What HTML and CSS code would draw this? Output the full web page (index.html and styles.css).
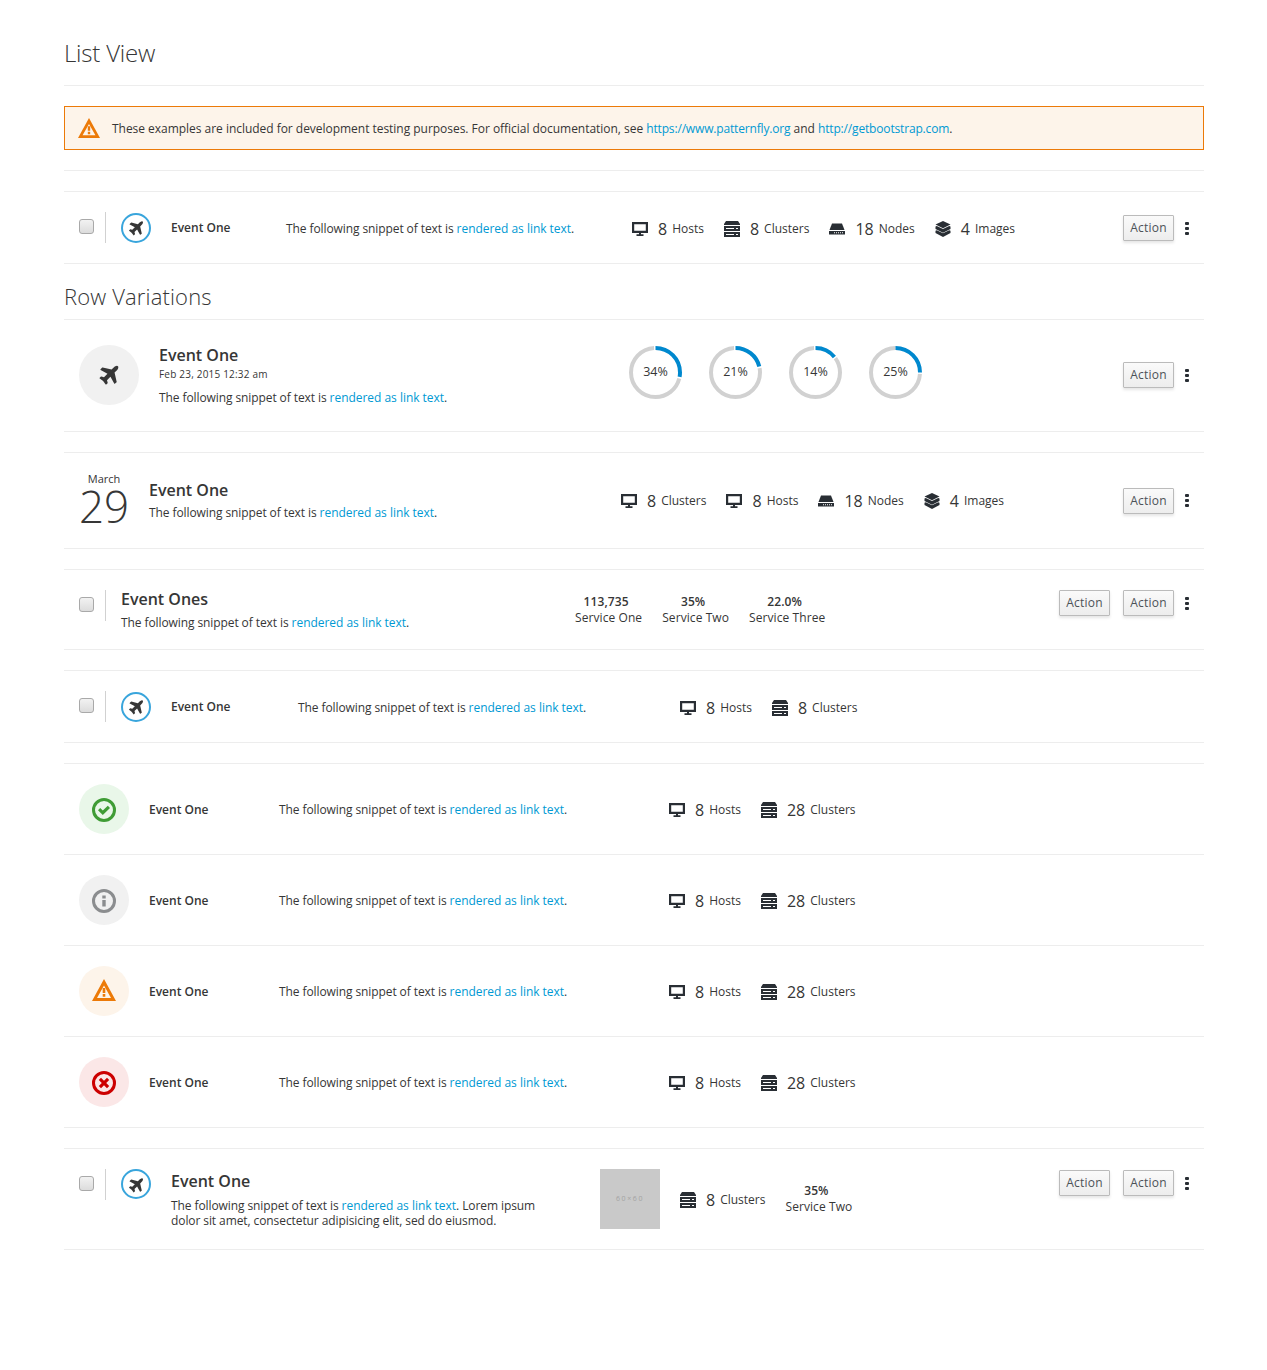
FILE: index.html
```html
<!DOCTYPE html>
<html lang="en">
<head>
  <meta charset="UTF-8">
  <title>List View</title>
  <link rel="stylesheet" href="styles.css">
</head>
<body>

<!-- Icon sprite -->
<svg class="sprite" xmlns="http://www.w3.org/2000/svg">
  <symbol id="i-plane" viewBox="0 0 1792 1792">
    <path d="M1568 160q44 52 12 148t-108 172l-161 161 160 696q5 19-12 33l-128 96q-7 6-19 6-4 0-7-1-15-3-21-16l-279-508-259 259 53 194q5 17-8 31l-96 96q-9 9-23 9h-2q-15-2-24-13l-189-252-252-189q-11-7-13-23-1-13 9-25l96-97q9-9 23-9 6 0 8 1l194 53 259-259-508-279q-14-8-17-24-2-16 9-27l128-128q14-13 30-8l665 159 160-160q76-76 172-108t148 12z"/>
  </symbol>
  <symbol id="i-desktop" viewBox="0 0 16 16">
    <path fill-rule="evenodd" d="M0 1h16v11H0zM2.200 3.200v6.600h11.600V3.200z"/>
    <path d="M7 12h2v1.200h2.500V15h-7v-1.800H7z"/>
  </symbol>
  <symbol id="i-cluster" viewBox="0 0 16 16">
    <path d="M2 0h12l2 3v1H0V3z"/>
    <path fill-rule="evenodd" d="M0 5h16v5H0zM2 7v1h8V7zM12 7v1h2V7zM0 11h16v5H0zM2 13v1h8v-1zM12 13v1h2v-1z"/>
  </symbol>
  <symbol id="i-node" viewBox="0 0 16 16">
    <path d="M3 2.500h10L15.500 9h-15z"/>
    <path fill-rule="evenodd" d="M0 10h16v3.500H0zM5 11.300v1h1v-1zM7 11.300v1h1v-1zM9 11.300v1h1v-1zM11 11.300v1h1v-1zM13 11.300v1h1v-1z"/>
  </symbol>
  <symbol id="i-image" viewBox="0 0 16 16">
    <path d="M8 0l7.500 3.500L8 7.200.5 3.500z"/>
    <path d="M.5 5.500L1.800 4.900 8 8l6.200-3.100 1.300.6V8L8 11.700.5 8z"/>
    <path d="M.5 9.800L1.800 9.200 8 12.300l6.200-3.100 1.300.6V12L8 16 .5 12z"/>
  </symbol>
  <symbol id="i-warning" viewBox="0 0 24 24">
    <path fill-rule="evenodd" d="M12 1L24 23H0zM12 7.500L5 20h14z"/>
    <path d="M10.700 10h2.600v5h-2.600zM10.700 16h2.600v2.700h-2.600z"/>
  </symbol>
  <symbol id="i-ok" viewBox="0 0 24 24">
    <circle cx="12" cy="12" r="10.500" fill="none" stroke="currentColor" stroke-width="3"/>
    <path d="M6 12.200l2.200-2.200 2.600 2.600 5-4.800 2.200 2.200-7.200 7z"/>
  </symbol>
  <symbol id="i-info" viewBox="0 0 24 24">
    <circle cx="12" cy="12" r="10.500" fill="none" stroke="currentColor" stroke-width="3"/>
    <path d="M10.300 6.500h3.400v3h-3.400zM10.300 11h3.400v6.500h-3.400z"/>
  </symbol>
  <symbol id="i-error" viewBox="0 0 24 24">
    <circle cx="12" cy="12" r="10.500" fill="none" stroke="currentColor" stroke-width="3"/>
    <path d="M9 6.800l3 3 3-3 2.200 2.200-3 3 3 3-2.200 2.200-3-3-3 3-2.200-2.200 3-3-3-3z"/>
  </symbol>
</svg>

<div class="container">
  <h1 class="page-title">List View</h1>

  <div class="alert">
    <svg class="alert-icon"><use href="#i-warning"/></svg>
    <span>These examples are included for development testing purposes. For official documentation, see <a href="#">https://www.patternfly.org</a> and <a href="#">http://getbootstrap.com</a>.</span>
  </div>

  <div class="rule"></div>

  <!-- Basic row -->
  <div class="list">
    <div class="row row-basic">
      <div class="check"><input type="checkbox"></div>
      <div class="ring"><svg class="plane"><use href="#i-plane"/></svg></div>
      <div class="name name-wide">Event One</div>
      <div class="desc desc-346">The following snippet of text is <a href="#">rendered as link text</a>.</div>
      <div class="stats">
        <div class="stat"><svg class="ico"><use href="#i-desktop"/></svg><b>8</b><span>Hosts</span></div>
        <div class="stat"><svg class="ico"><use href="#i-cluster"/></svg><b>8</b><span>Clusters</span></div>
        <div class="stat"><svg class="ico"><use href="#i-node"/></svg><b>18</b><span>Nodes</span></div>
        <div class="stat"><svg class="ico"><use href="#i-image"/></svg><b>4</b><span>Images</span></div>
      </div>
      <div class="actions"><button class="btn">Action</button><span class="kebab"><i></i><i></i><i></i></span></div>
    </div>
  </div>

  <h2 class="section-title">Row Variations</h2>

  <div class="list">
    <div class="row row-donut">
      <div class="avatar avatar-lg"><svg class="plane plane-lg"><use href="#i-plane"/></svg></div>
      <div class="main main-donut">
        <div class="title">Event One</div>
        <div class="date">Feb 23, 2015 12:32 am</div>
        <div class="text">The following snippet of text is <a href="#">rendered as link text</a>.</div>
      </div>
      <div class="donuts">
        <div class="donut"><svg viewBox="0 0 53 53"><circle class="track" cx="26.5" cy="26.5" r="24.5" pathLength="100" stroke-dasharray="70 30" stroke-dashoffset="-29"/><circle class="bar" cx="26.5" cy="26.5" r="24.5" pathLength="100" stroke-dasharray="28 72"/></svg><span>34%</span></div>
        <div class="donut"><svg viewBox="0 0 53 53"><circle class="track" cx="26.5" cy="26.5" r="24.5" pathLength="100" stroke-dasharray="77 23" stroke-dashoffset="-22"/><circle class="bar" cx="26.5" cy="26.5" r="24.5" pathLength="100" stroke-dasharray="21 79"/></svg><span>21%</span></div>
        <div class="donut"><svg viewBox="0 0 53 53"><circle class="track" cx="26.5" cy="26.5" r="24.5" pathLength="100" stroke-dasharray="84 16" stroke-dashoffset="-15"/><circle class="bar" cx="26.5" cy="26.5" r="24.5" pathLength="100" stroke-dasharray="14 86"/></svg><span>14%</span></div>
        <div class="donut"><svg viewBox="0 0 53 53"><circle class="track" cx="26.5" cy="26.5" r="24.5" pathLength="100" stroke-dasharray="74 26" stroke-dashoffset="-26"/><circle class="bar" cx="26.5" cy="26.5" r="24.5" pathLength="100" stroke-dasharray="25 75"/></svg><span>25%</span></div>
      </div>
      <div class="actions"><button class="btn">Action</button><span class="kebab"><i></i><i></i><i></i></span></div>
    </div>
  </div>

  <div class="list">
    <div class="row row-date">
      <div class="cal"><div class="month">March</div><div class="day">29</div></div>
      <div class="main main-date">
        <div class="title">Event One</div>
        <div class="text">The following snippet of text is <a href="#">rendered as link text</a>.</div>
      </div>
      <div class="stats">
        <div class="stat"><svg class="ico"><use href="#i-desktop"/></svg><b>8</b><span>Clusters</span></div>
        <div class="stat"><svg class="ico"><use href="#i-desktop"/></svg><b>8</b><span>Hosts</span></div>
        <div class="stat"><svg class="ico"><use href="#i-node"/></svg><b>18</b><span>Nodes</span></div>
        <div class="stat"><svg class="ico"><use href="#i-image"/></svg><b>4</b><span>Images</span></div>
      </div>
      <div class="actions"><button class="btn">Action</button><span class="kebab"><i></i><i></i><i></i></span></div>
    </div>
  </div>

  <div class="list">
    <div class="row row-top row-service">
      <div class="check"><input type="checkbox"></div>
      <div class="main main-service">
        <div class="title">Event Ones</div>
        <div class="text">The following snippet of text is <a href="#">rendered as link text</a>.</div>
      </div>
      <div class="services">
        <div class="service"><strong>113,735</strong>Service One</div>
        <div class="service"><strong>35%</strong>Service Two</div>
        <div class="service"><strong>22.0%</strong>Service Three</div>
      </div>
      <div class="actions"><button class="btn">Action</button><button class="btn">Action</button><span class="kebab"><i></i><i></i><i></i></span></div>
    </div>
  </div>

  <div class="list">
    <div class="row row-basic">
      <div class="check"><input type="checkbox"></div>
      <div class="ring"><svg class="plane"><use href="#i-plane"/></svg></div>
      <div class="name name-127">Event One</div>
      <div class="desc desc-382">The following snippet of text is <a href="#">rendered as link text</a>.</div>
      <div class="stats">
        <div class="stat"><svg class="ico"><use href="#i-desktop"/></svg><b>8</b><span>Hosts</span></div>
        <div class="stat"><svg class="ico"><use href="#i-cluster"/></svg><b>8</b><span>Clusters</span></div>
      </div>
    </div>
  </div>

  <!-- Status rows -->
  <div class="list">
    <div class="row row-status">
      <div class="avatar avatar-md bg-ok"><svg class="status ok"><use href="#i-ok"/></svg></div>
      <div class="name name-130">Event One</div>
      <div class="desc desc-390">The following snippet of text is <a href="#">rendered as link text</a>.</div>
      <div class="stats">
        <div class="stat"><svg class="ico"><use href="#i-desktop"/></svg><b>8</b><span>Hosts</span></div>
        <div class="stat"><svg class="ico"><use href="#i-cluster"/></svg><b>28</b><span>Clusters</span></div>
      </div>
    </div>
    <div class="row row-status">
      <div class="avatar avatar-md bg-info"><svg class="status info"><use href="#i-info"/></svg></div>
      <div class="name name-130">Event One</div>
      <div class="desc desc-390">The following snippet of text is <a href="#">rendered as link text</a>.</div>
      <div class="stats">
        <div class="stat"><svg class="ico"><use href="#i-desktop"/></svg><b>8</b><span>Hosts</span></div>
        <div class="stat"><svg class="ico"><use href="#i-cluster"/></svg><b>28</b><span>Clusters</span></div>
      </div>
    </div>
    <div class="row row-status">
      <div class="avatar avatar-md bg-warn"><svg class="status warn"><use href="#i-warning"/></svg></div>
      <div class="name name-130">Event One</div>
      <div class="desc desc-390">The following snippet of text is <a href="#">rendered as link text</a>.</div>
      <div class="stats">
        <div class="stat"><svg class="ico"><use href="#i-desktop"/></svg><b>8</b><span>Hosts</span></div>
        <div class="stat"><svg class="ico"><use href="#i-cluster"/></svg><b>28</b><span>Clusters</span></div>
      </div>
    </div>
    <div class="row row-status">
      <div class="avatar avatar-md bg-err"><svg class="status err"><use href="#i-error"/></svg></div>
      <div class="name name-130">Event One</div>
      <div class="desc desc-390">The following snippet of text is <a href="#">rendered as link text</a>.</div>
      <div class="stats">
        <div class="stat"><svg class="ico"><use href="#i-desktop"/></svg><b>8</b><span>Hosts</span></div>
        <div class="stat"><svg class="ico"><use href="#i-cluster"/></svg><b>28</b><span>Clusters</span></div>
      </div>
    </div>
  </div>

  <div class="list">
    <div class="row row-top row-image">
      <div class="check"><input type="checkbox"></div>
      <div class="ring"><svg class="plane"><use href="#i-plane"/></svg></div>
      <div class="main main-image">
        <div class="title">Event One</div>
        <div class="text">The following snippet of text is <a href="#">rendered as link text</a>. Lorem ipsum dolor sit amet, consectetur adipisicing elit, sed do eiusmod.</div>
      </div>
      <div class="thumb">60×60</div>
      <div class="stats stats-image">
        <div class="stat"><svg class="ico"><use href="#i-cluster"/></svg><b>8</b><span>Clusters</span></div>
        <div class="service"><strong>35%</strong>Service Two</div>
      </div>
      <div class="actions"><button class="btn">Action</button><button class="btn">Action</button><span class="kebab"><i></i><i></i><i></i></span></div>
    </div>
  </div>
</div>

</body>
</html>
```

FILE: styles.css
```css
body {
  font-family: "Open Sans", sans-serif;
  font-size: 12px;
  line-height: 20px;
  color: #363636;
  background: #fff;
  margin: 0;
}
a {
  color: #0099d3;
  text-decoration: none;
}
.sprite {
  display: block;
  width: 0;
  height: 0;
}
.container {
  width: 1140px;
  margin: 0 0 0 64px;
  padding-top: 35px;
  padding-bottom: 100px;
}

/* Headings */
.page-title {
  font-size: 24px;
  font-weight: 300;
  line-height: 36px;
  letter-spacing: -.2px;
  margin: 0;
  padding-bottom: 14px;
  border-bottom: 1px solid #ededed;
}
.section-title {
  font-size: 22px;
  font-weight: 300;
  line-height: 30px;
  letter-spacing: .15px;
  margin: -3px 0 0;
  padding-bottom: 8px;
}

/* Alert */
.alert {
  display: flex;
  align-items: center;
  height: 42px;
  margin-top: 20px;
  border: 1px solid #ec7a08;
  background: #fdf4ea;
  padding-left: 13px;
}
.alert span {
  letter-spacing: -.03px;
  padding-top: 2px;
}
.alert a {
  letter-spacing: -.16px;
}
.alert-icon {
  width: 22px;
  height: 22px;
  margin-right: 12px;
  fill: #ec7a08;
}
.rule {
  border-top: 1px solid #ededed;
  margin-top: 20px;
  margin-bottom: 20px;
}

/* List rows */
.list {
  border-top: 1px solid #ededed;
  margin-bottom: 20px;
}
.row {
  display: flex;
  align-items: center;
  padding-left: 15px;
  border-bottom: 1px solid #ededed;
}
.row-top {
  align-items: flex-start;
}
.row-basic {
  height: 71px;
}
.row-donut {
  height: 111px;
}
.row-donut .avatar,
.row-donut .actions {
  margin-bottom: 1px;
}
.row-date {
  height: 95px;
}
.row-date .stat {
  padding-top: 0;
}
.row-date .kebab {
  padding-top: 0;
  margin-bottom: 1px;
}
.row-service {
  height: 80px;
  padding-top: 20px;
  box-sizing: border-box;
}
.row-status {
  height: 90px;
}
.row-status .name {
  padding-top: 2px;
}
.row-image {
  height: 101px;
  padding-top: 20px;
  box-sizing: border-box;
}
.row-image .actions {
  margin-top: 1px;
}

/* Checkbox with divider */
.check {
  display: flex;
  align-items: center;
  width: 26px;
  height: 31px;
  border-right: 1px solid #d1d1d1;
  margin-right: 15px;
  flex: none;
}
.check input {
  appearance: none;
  width: 15px;
  height: 15px;
  margin: 0 0 2px;
  border: 1px solid #a9a9a9;
  border-radius: 3px;
  background: linear-gradient(#f2f2f2, #dcdcdc);
}

/* Leading icons */
.ring {
  display: flex;
  align-items: center;
  justify-content: center;
  box-sizing: border-box;
  width: 30px;
  height: 30px;
  border: 2px solid #39a5dc;
  border-radius: 50%;
  flex: none;
}
.plane {
  width: 18px;
  height: 18px;
  margin-top: 3px;
  fill: #363636;
}
.plane-lg {
  width: 24px;
  height: 24px;
  margin-top: 1px;
}
.avatar {
  display: flex;
  align-items: center;
  justify-content: center;
  border-radius: 50%;
  background: #f1f1f1;
  flex: none;
}
.avatar-lg {
  width: 60px;
  height: 60px;
}
.avatar-md {
  width: 50px;
  height: 50px;
}
.bg-ok {
  background: #e9f7e9;
}
.bg-info {
  background: #f1f1f1;
}
.bg-warn {
  background: #fdf4ea;
}
.bg-err {
  background: #fbe7e7;
}
.status {
  width: 24px;
  height: 24px;
  margin-top: 2px;
  fill: currentColor;
}
.ok {
  color: #3f9c35;
}
.info {
  color: #8b8d8f;
}
.warn {
  color: #ec7a08;
  margin-top: 0;
  margin-bottom: 2px;
}
.err {
  color: #cc0000;
}

/* Text columns */
.name {
  font-weight: 600;
  flex: none;
}
.name-wide {
  width: 115px;
  margin-left: 20px;
}
.name-127 {
  width: 127px;
  margin-left: 20px;
}
.name-130 {
  width: 130px;
  margin-left: 20px;
}
.desc {
  flex: none;
  padding-top: 2px;
  letter-spacing: -.09px;
}
.desc-346 {
  width: 346px;
}
.desc-382 {
  width: 382px;
}
.desc-390 {
  width: 390px;
}
.text {
  letter-spacing: -.09px;
}
.desc a,
.text a {
  letter-spacing: -.03px;
}
.title {
  font-size: 16px;
  font-weight: 600;
  line-height: 22px;
}
.date {
  font-size: 10px;
  line-height: 16px;
  letter-spacing: .2px;
  margin-bottom: 6px;
}
.main {
  flex: none;
}
.main-donut {
  width: 470px;
  margin-left: 20px;
}
.main-date {
  width: 472px;
  margin-left: 20px;
}
.main-date .title {
  margin-bottom: 2px;
}
.main-service {
  width: 454px;
  margin-top: -2px;
}
.main-service .title {
  margin-bottom: 3px;
}
.main-image {
  width: 429px;
  margin-left: 20px;
  margin-top: 1px;
}
.main-image .text {
  width: 380px;
  line-height: 15px;
  margin-top: 6px;
}

/* Date block */
.cal {
  width: 50px;
  padding-bottom: 5px;
  text-align: center;
  flex: none;
}
.month {
  font-size: 11px;
  line-height: 14px;
  margin-bottom: 1px;
}
.day {
  font-size: 44px;
  font-weight: 300;
  line-height: 38px;
}

/* Stats */
.stats {
  display: flex;
  align-items: center;
  gap: 20px;
}
.stat {
  display: flex;
  align-items: center;
  padding-top: 2px;
  white-space: nowrap;
}
.ico {
  width: 16px;
  height: 16px;
  fill: #292e34;
  margin-right: 10px;
}
.stat b {
  font-size: 16px;
  font-weight: 500;
  margin-right: 5px;
}
.service {
  text-align: center;
  line-height: 16px;
  letter-spacing: .08px;
}
.service strong {
  display: block;
  font-weight: 600;
  padding-right: 5px;
}
.services {
  display: flex;
  gap: 20px;
  padding-top: 4px;
}
.stats-image {
  height: 60px;
}

/* Donuts */
.donuts {
  display: flex;
  gap: 27px;
  margin-top: -6px;
}
.donut {
  position: relative;
  width: 53px;
  height: 53px;
}
.donut svg {
  display: block;
  transform: rotate(-90deg);
}
.donut circle {
  fill: none;
  stroke-width: 4;
}
.track {
  stroke: #d1d1d1;
}
.bar {
  stroke: #0088ce;
}
.donut span {
  position: absolute;
  top: 0;
  left: 0;
  width: 53px;
  font-size: 12.5px;
  line-height: 52px;
  text-align: center;
}

/* Actions */
.actions {
  display: flex;
  align-items: center;
  margin-left: auto;
  padding-right: 15px;
}
.row-top .actions {
  height: 26px;
}
.btn {
  font: 12px/1 "Open Sans", sans-serif;
  letter-spacing: .2px;
  color: #4d5258;
  width: 51px;
  height: 26px;
  padding: 0;
  margin-left: 13px;
  border: 1px solid #bbb;
  border-radius: 1px;
  background: linear-gradient(#fafafa, #ededed);
  box-shadow: 0 2px 3px rgba(3, 3, 3, .1);
}
.kebab {
  display: flex;
  flex-direction: column;
  gap: 2px;
  width: 4px;
  margin-left: 11px;
  padding-top: 1px;
}
.kebab i {
  display: block;
  width: 4px;
  height: 3px;
  border-radius: 1px;
  background: #292e34;
}

/* Placeholder image */
.thumb {
  width: 60px;
  height: 60px;
  background: #c9c9c9;
  color: #a3a3a3;
  font-size: 7px;
  letter-spacing: 1.6px;
  text-align: center;
  line-height: 60px;
  margin-right: 20px;
  flex: none;
}
```
